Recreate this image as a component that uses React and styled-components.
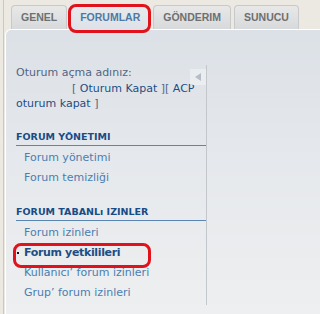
import React from "react";
import styled, { createGlobalStyle } from "styled-components";

const Global = createGlobalStyle`
  html, body { margin: 0; padding: 0; background: #ECE9E3; overflow: hidden; }
  body { font-family: "DejaVu Sans", Verdana, sans-serif; }
  * { box-sizing: border-box; }
`;

const Frame = styled.div`
  margin-left: 3px;
  border-left: 1px solid #CCC8C0;
  height: 314px;
  display: flex;
  flex-direction: column;
  overflow: hidden;
`;

const TabRow = styled.div`
  display: flex;
  gap: 3px;
  padding: 5px 0 0 7px;
  height: 29px;
  white-space: nowrap;
  position: relative;
  z-index: 2;
`;

const Tab = styled.div`
  position: relative;
  flex: none;
  height: ${p => (p.$active ? "25px" : "24px")};
  padding: 0 9px;
  border: 1px solid ${p => (p.$active ? "#D4D8DE" : "#C9C9C9")};
  border-bottom: none;
  border-radius: 4px 4px 0 0;
  background: ${p =>
    p.$active
      ? "linear-gradient(#E6E9ED, #DEE2E8)"
      : "linear-gradient(#E8E8E8, #D7D9DB)"};
  font-family: "Liberation Sans", Arial, sans-serif;
  font-weight: bold;
  font-size: 10.5px;
  line-height: 23px;
  color: ${p => (p.$active ? "#4D7AA5" : "#6F6F6F")};
  &::after {
    content: "";
    display: ${p => (p.$mark ? "block" : "none")};
    position: absolute;
    left: -3px;
    right: -2px;
    top: -2px;
    bottom: -3px;
    border: 3px solid #E0121B;
    border-radius: 8px;
  }
`;

const Panel = styled.div`
  flex: 1;
  margin-left: 1px;
  border: 1px solid #FFFFFF;
  border-right: none;
  border-bottom: none;
  border-top-left-radius: 6px;
  background: linear-gradient(#DCE1E7 0%, #E5E8EC 45%, #EEEFF0 100%);
  padding: 32px 0 0 10px;
`;

const Column = styled.div`
  position: relative;
  width: 191px;
  border-right: 1px solid #C3C7CC;
  padding-bottom: 2px;
`;

const Info = styled.div`
  margin-top: 3px;
  font-size: 11px;
  line-height: 15.5px;
  color: #536482;
  white-space: nowrap;
`;

const Indented = styled.span`
  padding-left: 56px;
`;

const InfoLink = styled.span`
  color: #1A4E85;
`;

const Collapse = styled.div`
  position: absolute;
  right: 0;
  top: 4px;
  width: 16px;
  height: 16px;
  background: rgba(236, 238, 241, 0.85);
  display: flex;
  align-items: center;
  justify-content: center;
`;

const Heading = styled.div`
  margin-top: ${p => p.$gap}px;
  font-size: 9.5px;
  font-weight: bold;
  line-height: 14px;
  color: #174C86;
  padding-bottom: 1px;
  border-bottom: 1px solid #5A86B4;
  white-space: nowrap;
`;

const Menu = styled.ul`
  list-style: none;
  margin: ${p => p.$top || 0}px 0 0 0;
  padding: 0;
`;

const Item = styled.li`
  position: relative;
  height: 20px;
  line-height: 20px;
  padding-left: 8px;
  font-size: 11px;
  white-space: nowrap;
  color: ${p => (p.$active ? "#1D4E84" : "#4A7EB2")};
  font-weight: ${p => (p.$active ? "bold" : "normal")};
  letter-spacing: ${p => (p.$active ? "-0.35px" : "0")};
  &::before {
    content: "";
    display: ${p => (p.$active ? "inline-block" : "none")};
    width: 2px;
    height: 2px;
    background: #111;
    margin-left: -7px;
    margin-right: 5px;
    vertical-align: middle;
  }
  &::after {
    content: "";
    display: ${p => (p.$active ? "block" : "none")};
    position: absolute;
    left: -3px;
    top: 0;
    width: 132px;
    height: 19px;
    border: 3px solid #E0121B;
    border-radius: 8px;
  }
`;

export default function App() {
  return (
    <>
      <Global />
      <Frame>
        <TabRow>
          <Tab>GENEL</Tab>
          <Tab $active $mark>FORUMLAR</Tab>
          <Tab>GÖNDERIM</Tab>
          <Tab>SUNUCU</Tab>
        </TabRow>
        <Panel>
          <Column>
            <Info>
              Oturum açma adınız:
              <br />
              <Indented>
                [ <InfoLink>Oturum Kapat</InfoLink> ][ <InfoLink>ACP</InfoLink>
              </Indented>
              <br />
              <InfoLink>oturum kapat</InfoLink> ]
            </Info>
            <Collapse>
              <svg width="10" height="10" viewBox="0 0 10 10">
                <polygon points="8,1 8,9 2,5" fill="#B7BDC6" />
              </svg>
            </Collapse>
            <Heading $gap={18}>FORUM YÖNETIMI</Heading>
            <Menu $top={2}>
              <Item>Forum yönetimi</Item>
              <Item>Forum temizliği</Item>
            </Menu>
            <Heading $gap={17}>FORUM TABANLı IZINLER</Heading>
            <Menu $top={2}>
              <Item>Forum izinleri</Item>
              <Item $active>Forum yetkilileri</Item>
              <Item>Kullanıcı’ forum izinleri</Item>
              <Item>Grup’ forum izinleri</Item>
            </Menu>
          </Column>
        </Panel>
      </Frame>
    </>
  );
}
